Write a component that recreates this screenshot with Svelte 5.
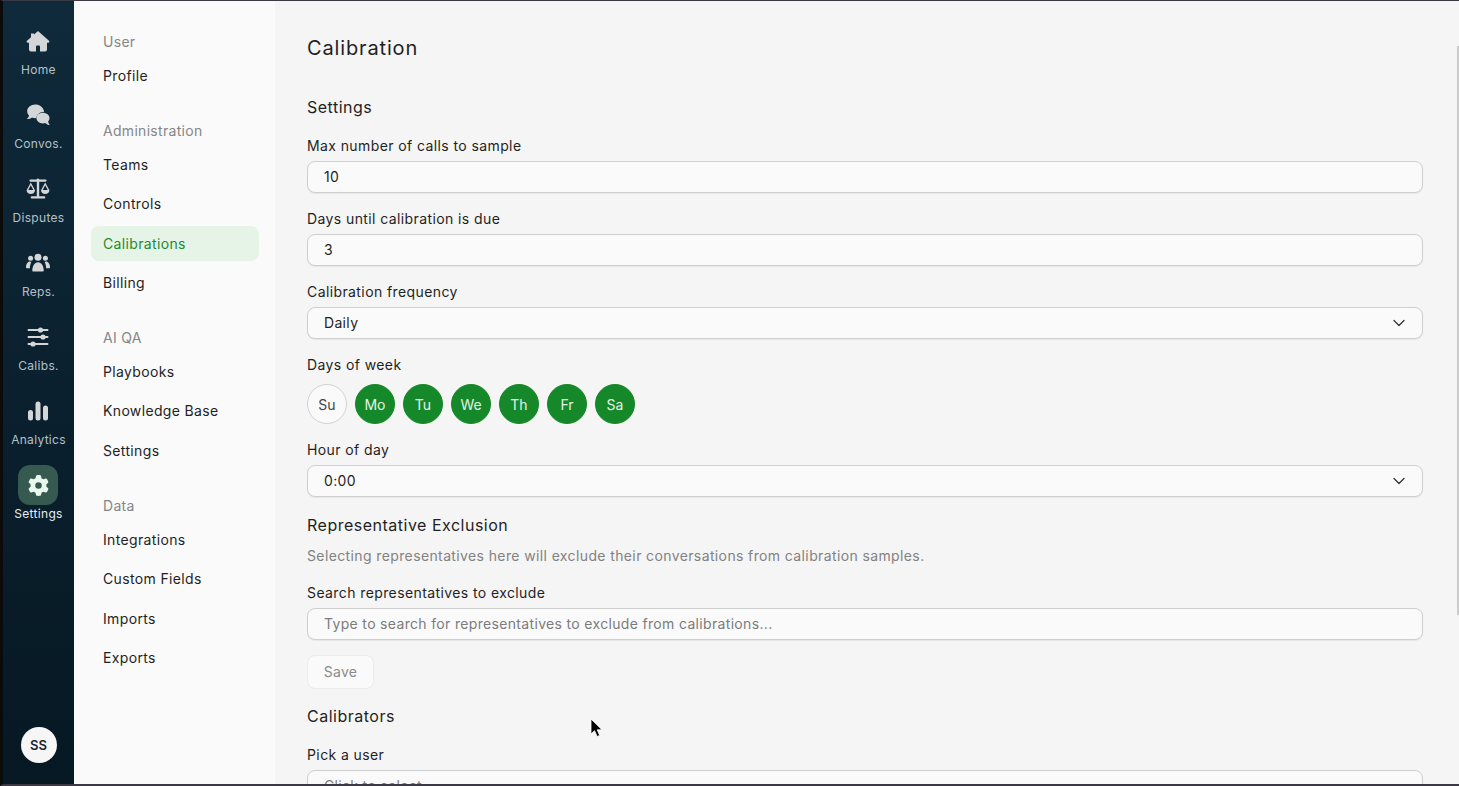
<script>
  const rail = [
    { id: 'home', label: 'Home' },
    { id: 'convos', label: 'Convos.' },
    { id: 'disputes', label: 'Disputes' },
    { id: 'reps', label: 'Reps.' },
    { id: 'calibs', label: 'Calibs.' },
    { id: 'analytics', label: 'Analytics' },
    { id: 'settings', label: 'Settings', active: true }
  ];
  const sections = [
    { title: 'User', items: ['Profile'] },
    { title: 'Administration', items: ['Teams', 'Controls', 'Calibrations', 'Billing'] },
    { title: 'AI QA', items: ['Playbooks', 'Knowledge Base', 'Settings'] },
    { title: 'Data', items: ['Integrations', 'Custom Fields', 'Imports', 'Exports'] }
  ];
  const days = [
    { d: 'Su', on: false }, { d: 'Mo', on: true }, { d: 'Tu', on: true }, { d: 'We', on: true },
    { d: 'Th', on: true }, { d: 'Fr', on: true }, { d: 'Sa', on: true }
  ];
</script>

{#snippet chevron()}
  <svg class="chev" viewBox="0 0 16 16" aria-hidden="true"><path d="M3 5.500l5 5 5-5" fill="none" stroke="#33333a" stroke-width="1.300" stroke-linecap="round" stroke-linejoin="round"/></svg>
{/snippet}

{#snippet icon(id)}
  {#if id === 'home'}
    <svg viewBox="0 0 24 24"><path fill-rule="evenodd" d="M12 2 23 11.800a1.100 1.100 0 0 1-.8 1.900H21v6.800a2 2 0 0 1-2 2H5a2 2 0 0 1-2-2v-6.800H1.800A1.100 1.100 0 0 1 1 11.800L5 8.200V4.500h3v1zM10 17.500v5h4v-5a1 1 0 0 0-1-1h-2a1 1 0 0 0-1 1z"/></svg>
  {:else if id === 'convos'}
    <svg viewBox="0 0 24 24"><path d="M9.200 1.500C4.700 1.500 1.200 4.500 1.200 8.200c0 1.700.7 3.200 1.900 4.400-.3 1.300-1.200 2.600-2.300 3.500 1.900.1 3.800-.6 5.200-1.600 1.300.5 2.700.8 4.200.6.500-3.500 3.900-6.200 8-6.300C17.400 4.200 13.700 1.500 9.200 1.500z"/><path d="M16.800 9.800c-3.500 0-6.400 2.400-6.400 5.300s2.900 5.300 6.400 5.300c.9 0 1.800-.2 2.600-.5 1 .9 2.600 2.100 4.300 2.100-.8-1-1.400-2.300-1.600-3.400.9-.9 1.400-2.200 1.400-3.500 0-2.900-2.900-5.300-6.700-5.300z"/></svg>
  {:else if id === 'disputes'}
    <svg viewBox="0 0 24 24"><path d="M12 1.500a1.500 1.500 0 0 1 1.400 1h6.100a1.100 1.100 0 0 1 0 2.200h-6.300v14.600h5a1.100 1.100 0 0 1 0 2.200H5.800a1.100 1.100 0 0 1 0-2.200h5V4.700H4.500a1.100 1.100 0 0 1 0-2.200h6.100a1.500 1.500 0 0 1 1.400-1z"/><path fill-rule="evenodd" d="M4.800 5.500 .6 13.300c0 2.200 1.900 3.700 4.200 3.700s4.200-1.500 4.200-3.700zM4.800 8.300l2.500 4.700H2.300zM19.200 5.500 15 13.300c0 2.200 1.900 3.700 4.200 3.700s4.200-1.500 4.200-3.700zM19.200 8.300l2.500 4.700h-5z"/></svg>
  {:else if id === 'reps'}
    <svg viewBox="0 0 24 24"><circle cx="12" cy="6.200" r="3.500"/><circle cx="4.600" cy="7.200" r="2.500"/><circle cx="19.400" cy="7.200" r="2.500"/><path d="M6.300 19.500c0-4.400 2.200-8.300 5.700-8.300s5.700 3.900 5.700 8.300c0 .6-.4 1-1 1H7.300c-.6 0-1-.4-1-1z"/><path d="M5.300 11.100c-.9 1.900-1.400 4-1.400 6.200H1c-.5 0-1-.4-1-1 0-3.200 1.700-5.700 4-5.700.5 0 .9.200 1.300.5zM18.700 11.100c.9 1.900 1.400 4 1.400 6.200H23c.5 0 1-.4 1-1 0-3.200-1.700-5.700-4-5.700-.5 0-.9.200-1.300.5z"/></svg>
  {:else if id === 'calibs'}
    <svg viewBox="0 0 24 24"><rect x="1.500" y="4" width="21" height="2" rx="1"/><rect x="1.500" y="11" width="21" height="2" rx="1"/><rect x="1.500" y="18" width="21" height="2" rx="1"/><circle cx="14.500" cy="5" r="2.600"/><circle cx="17" cy="12" r="2.600"/><circle cx="7" cy="19" r="2.600"/></svg>
  {:else if id === 'analytics'}
    <svg viewBox="0 0 24 24"><rect x="2" y="11" width="5" height="10.500" rx="2.500"/><rect x="9.500" y="2.500" width="5" height="19" rx="2.500"/><rect x="17" y="6.500" width="5" height="15" rx="2.500"/></svg>
  {:else}
    <svg viewBox="0 0 512 512"><path d="M495.900 166.600c3.200 8.700 .5 18.400-6.400 24.600l-43.300 39.400c1.100 8.300 1.700 16.800 1.700 25.400s-.6 17.100-1.700 25.400l43.300 39.400c6.900 6.200 9.600 15.900 6.400 24.600c-4.400 11.900-9.700 23.300-15.800 34.300l-4.700 8.100c-6.600 11-14 21.400-22.100 31.200c-5.900 7.200-15.700 9.600-24.500 6.800l-55.700-17.700c-13.400 10.300-28.200 18.900-44 25.400l-12.500 57.100c-2 9.100-9 16.300-18.200 17.800c-13.800 2.300-28 3.500-42.500 3.500s-28.700-1.200-42.500-3.500c-9.200-1.500-16.200-8.700-18.200-17.800l-12.500-57.100c-15.800-6.500-30.600-15.100-44-25.400L83.100 425.900c-8.800 2.800-18.600 .3-24.500-6.800c-8.100-9.800-15.500-20.200-22.100-31.200l-4.700-8.100c-6.100-11-11.400-22.400-15.800-34.300c-3.200-8.700-.5-18.400 6.400-24.600l43.300-39.400C64.600 273.100 64 264.600 64 256s.6-17.100 1.700-25.400L22.400 191.200c-6.900-6.200-9.600-15.900-6.400-24.600c4.400-11.900 9.700-23.300 15.800-34.300l4.700-8.100c6.600-11 14-21.400 22.100-31.200c5.900-7.200 15.700-9.600 24.500-6.800l55.700 17.700c13.400-10.300 28.200-18.900 44-25.400l12.500-57.100c2-9.100 9-16.300 18.200-17.800C227.300 1.200 241.500 0 256 0s28.700 1.200 42.500 3.500c9.200 1.500 16.200 8.700 18.200 17.800l12.500 57.100c15.800 6.500 30.600 15.100 44 25.400l55.700-17.700c8.800-2.800 18.600-.3 24.500 6.800c8.100 9.800 15.500 20.200 22.100 31.200l4.700 8.100c6.100 11 11.400 22.400 15.800 34.300zM256 336a80 80 0 1 0 0-160 80 80 0 1 0 0 160z"/></svg>
  {/if}
{/snippet}

<div class="frame">
  <nav class="rail">
    {#each rail as r}
      <div class="rail-item" class:active={r.active}>
        <span class="rail-box">{@render icon(r.id)}</span>
        <span class="rail-label">{r.label}</span>
      </div>
    {/each}
    <div class="avatar">SS</div>
  </nav>

  <aside class="side">
    {#each sections as s}
      <section class="side-sec">
        <div class="side-title">{s.title}</div>
        <ul>
          {#each s.items as it}
            <li class:on={it === 'Calibrations'}>{it}</li>
          {/each}
        </ul>
      </section>
    {/each}
  </aside>

  <main class="main">
    <h1>Calibration</h1>
    <h2 class="h-settings">Settings</h2>

    <div class="field first">
      <label for="a">Max number of calls to sample</label>
      <div class="ctl" id="a">10</div>
    </div>
    <div class="field">
      <label for="b">Days until calibration is due</label>
      <div class="ctl" id="b">3</div>
    </div>
    <div class="field">
      <label for="c">Calibration frequency</label>
      <div class="ctl sel" id="c">Daily{@render chevron()}</div>
    </div>
    <div class="field days-field">
      <span class="lbl">Days of week</span>
      <div class="days">
        {#each days as x}
          <span class="day" class:on={x.on}>{x.d}</span>
        {/each}
      </div>
    </div>
    <div class="field">
      <label for="d">Hour of day</label>
      <div class="ctl sel" id="d">0:00{@render chevron()}</div>
    </div>

    <h2 class="h-excl">Representative Exclusion</h2>
    <p class="desc">Selecting representatives here will exclude their conversations from calibration samples.</p>
    <div class="field search">
      <label for="e">Search representatives to exclude</label>
      <div class="ctl ph" id="e">Type to search for representatives to exclude from calibrations...</div>
    </div>
    <button class="save" disabled>Save</button>

    <h2 class="h-cal">Calibrators</h2>
    <div class="field pick">
      <label for="f">Pick a user</label>
      <div class="ctl ph" id="f">Click to select...</div>
    </div>
  </main>

  <div class="thumb"></div>
  <svg class="cursor" viewBox="0 0 14 20" aria-hidden="true"><path d="M1 1v15l3.600-3.300 2.500 5.800 2.600-1.100-2.500-5.600H12z" fill="#000" stroke="#fff" stroke-width=".8"/></svg>
</div>

<style>
  :global(body) { margin: 0; background: #f5f5f5; }
  .frame {
    position: relative;
    box-sizing: border-box;
    display: grid;
    grid-template-columns: 71px 201px 1fr;
    width: 1459px;
    height: 786px;
    overflow: hidden;
    border-top: 1px solid #3b3944;
    border-bottom: 2px solid #3b3944;
    border-left: 3px solid #0b0b0c;
    font-family: Inter, "Noto Sans", sans-serif;
    color: #1f1f24;
  }
  .rail {
    display: flex;
    flex-direction: column;
    align-items: center;
    gap: 3px;
    padding: 20px 0 0 0;
    box-sizing: border-box;
    background: linear-gradient(180deg, #0f2a3b 0%, #0a1f2d 55%, #061822 100%);
  }
  .rail-item { display: flex; flex-direction: column; align-items: center; width: 100%; height: 71px; }
  .rail-box { width: 40px; height: 40px; border-radius: 12px; display: grid; place-items: center; margin-left: -1px; }
  .rail-box svg { width: 24px; height: 24px; fill: #d4d6d8; }
  .rail-label { height: 18px; line-height: 18px; font-size: 12px; color: #b4c0c9; letter-spacing: .3px; white-space: nowrap; }
  .rail-item.active .rail-box { background: #365a50; }
  .rail-item.active .rail-box svg { width: 21px; height: 21px; fill: #e9f7ee; }
  .rail-item.active .rail-label { color: #e6edf0; }
  .avatar {
    margin-top: auto;
    margin-bottom: 39px;
    width: 36px; height: 36px; border-radius: 50%;
    background: #f6f6f6; color: #1d2530;
    display: grid; place-items: center;
    font-size: 13px; font-weight: 600;
  }
  .side { background: #fafafa; padding: 31px 16px 0 17px; box-sizing: border-box; }
  .side-sec { margin-bottom: 27.600px; }
  .side-title { padding-left: 12px; height: 20px; line-height: 20px; font-size: 14px; letter-spacing: .3px; color: #868686; margin-bottom: 6.100px; }
  ul { list-style: none; margin: 0; padding: 0; display: flex; flex-direction: column; gap: 4.500px; }
  li { height: 35px; line-height: 35px; padding-left: 12px; border-radius: 8px; font-size: 14px; letter-spacing: .35px; color: #1f1f24; }
  li.on { background: #e5f4e7; color: #1f8a30; }
  .main { background: #f5f5f5; padding: 0 36px 0 32px; min-width: 0; }
  h1 { margin: 31px 0 0; font-size: 20px; line-height: 32px; font-weight: 400; letter-spacing: .85px; color: #1f1f24; }
  h2 { margin: 0; font-size: 16px; line-height: 24px; font-weight: 400; letter-spacing: .5px; color: #1f1f24; }
  .h-settings { margin-top: 31px; }
  .field { display: flex; flex-direction: column; gap: 5px; margin-top: 16px; }
  .field.first { margin-top: 17px; }
  label, .lbl { display: block; height: 20px; line-height: 20px; font-size: 14px; letter-spacing: .4px; color: #1f1f24; }
  .ctl {
    position: relative;
    box-sizing: border-box;
    height: 32px;
    line-height: 30px;
    padding-left: 16px;
    background: #fafafa;
    border: 1px solid #cfcfcf;
    border-radius: 8px;
    box-shadow: 0 1px 1px rgba(0,0,0,.06);
    font-size: 14px;
    letter-spacing: .33px;
    color: #1f1f24;
  }
  .ph { color: #7c7c7c; }
  .chev { position: absolute; right: 15px; top: 7px; width: 16px; height: 16px; }
  .days-field { gap: 9px; }
  .days { display: flex; gap: 8px; }
  .day {
    box-sizing: border-box;
    width: 40px; height: 40px; border-radius: 50%;
    display: grid; place-items: center;
    font-size: 14px;
    background: #fafafa; border: 1px solid #d2d2d2; color: #444;
  }
  .day.on { background: #15892a; border-color: #15892a; color: #e4f3e7; }
  .h-excl { margin-top: 16px; }
  .desc { margin: 9px 0 0; height: 20px; line-height: 20px; font-size: 14px; letter-spacing: .38px; color: #828282; }
  .search { margin-top: 17px; }
  .save {
    display: block;
    margin-top: 15px;
    box-sizing: border-box;
    width: 67px; height: 34px;
    background: #fafafa;
    border: 1px solid #ebebeb;
    border-radius: 8px;
    font: inherit; font-size: 14px; letter-spacing: .3px; color: #8a8a8a;
    padding: 0 0 1px;
  }
  .h-cal { margin-top: 15px; }
  .pick { margin-top: 17px; }
  .thumb { position: absolute; right: 0; top: 45px; width: 2px; height: 569px; background: #cbcbcb; }
  .cursor { position: absolute; left: 587px; top: 717px; width: 14px; height: 20px; }
</style>
